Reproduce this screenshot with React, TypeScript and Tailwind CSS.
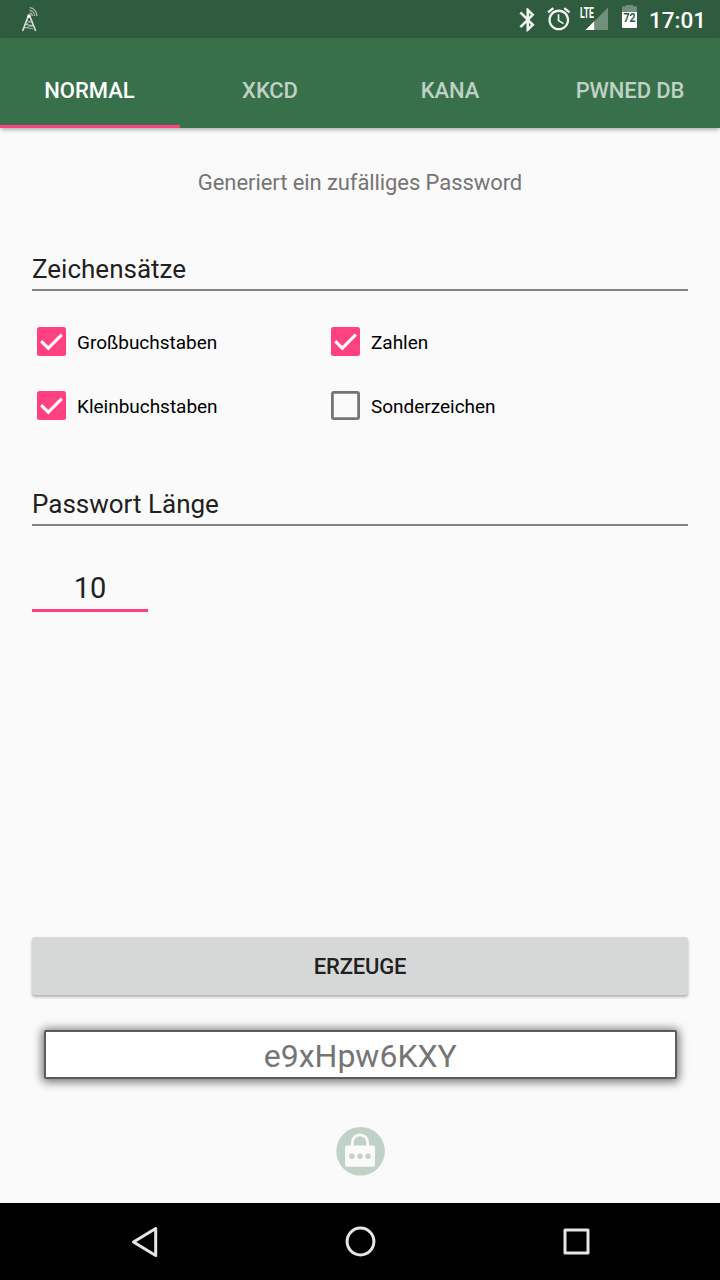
import { useState } from "react";

const tabs = ["NORMAL", "XKCD", "KANA", "PWNED DB"];

function StatusBar() {
  return (
    <div className="flex h-[38px] shrink-0 items-start bg-[#2f5b3e] text-white">
      <svg className="mt-[6px] ml-[20px] h-[26px] w-[20px]" viewBox="0 0 20 26" fill="none" stroke="#d5ded8">
        <path d="M8.3 10 2.6 25M9.700 10l6 15" strokeWidth="1.700" />
        <path d="M7 14.500l4.200 2M11 14.500l-5 4 7.500 1.500M5.500 18.500l7 1M4.500 22l9.500-2.500M4.500 21.500l8.500 1.300" strokeWidth=".9" opacity=".7" />
        <rect x="7.500" y="8.400" width="3" height="3.400" fill="white" stroke="none" />
        <path d="M9.500 6.800a3.200 3.200 0 0 1 2.800 3.200M9.500 4.300a5.600 5.600 0 0 1 5.100 5.700M9.500 1.700a7.900 7.900 0 0 1 7.400 8.300" strokeWidth="1.300" opacity=".7" />
      </svg>
      <div className="flex-1" />
      <svg className="mt-[5.7px] h-[27.6px] w-[27.6px]" viewBox="0 0 24 24" fill="#f3f6f4" stroke="#f3f6f4" strokeWidth=".3">
        <path d="M17.71 7.71 12 2h-1v7.59L6.41 5 5 6.41 10.59 12 5 17.59 6.41 19 11 14.41V22h1l5.71-5.71-4.3-4.29 4.3-4.29zM13 5.83l1.88 1.88L13 9.59V5.83zm1.88 10.46L13 18.17v-3.76l1.88 1.88z" />
      </svg>
      <svg className="mt-[5.4px] ml-[3.5px] h-[27.6px] w-[27.6px]" viewBox="0 0 24 24" fill="#f3f6f4">
        <path d="M22 5.72l-4.6-3.86-1.29 1.53 4.6 3.86L22 5.72zM7.88 3.39 6.6 1.86 2 5.71l1.29 1.53 4.59-3.85zM12.5 8H11v6l4.75 2.85.75-1.23-4-2.37V8zM12 4c-4.97 0-9 4.03-9 9s4.02 9 9 9c4.97 0 9-4.03 9-9s-4.03-9-9-9zm0 16c-3.87 0-7-3.13-7-7s3.13-7 7-7 7 3.13 7 7-3.13 7-7 7z" />
      </svg>
      <svg className="mt-[5px] ml-[7.2px] h-[27px] w-[30px]" viewBox="0 0 30 27">
        <path d="M28 2.500V25H5.500z" fill="#718f7b" />
        <path d="M14.200 16.300V25H5.500z" fill="#fff" />
        <path d="M0 1h14.500v13H0z" fill="#2f5b3e" />
        <text x="0" y="12.800" fill="#fff" fontFamily="Roboto" fontSize="14.500" fontWeight="700" textLength="14" lengthAdjust="spacingAndGlyphs">LTE</text>
      </svg>
      <svg className="mt-[5px] ml-[12px] h-[24px] w-[15px]" viewBox="0 0 15 24">
        <path d="M0 7V2.200Q0 1.200 1 1.200h3V0h7v1.200h3q1 0 1 1V7z" fill="#718f7b" />
        <path d="M0 7h15v14.500Q15 23 14 23H1Q0 23 0 21.500z" fill="#fff" />
        <text x="1.500" y="17.300" fill="#2f5b3e" fontFamily="Roboto" fontSize="12" fontWeight="700" textLength="12" lengthAdjust="spacingAndGlyphs">72</text>
      </svg>
      <span className="mt-[5px] mr-[14px] ml-[11px] w-[58px] text-right text-[22.5px] leading-[30px] font-medium">17:01</span>
    </div>
  );
}

function Check({ label, initial }: { label: string; initial: boolean }) {
  const [checked, setChecked] = useState(initial);
  return (
    <button className="flex h-16 items-center pl-[5px] text-left" role="checkbox" aria-checked={checked} onClick={() => setChecked(!checked)}>
      <svg className="-mt-px h-[29px] w-[29px] shrink-0" viewBox="0 0 29 29" fill="none">
        {checked ? (
          <>
            <rect width="29" height="29" rx="2.500" fill="#ff4081" />
            <path d="M4.200 14.200l7.100 7L24.800 7.700" stroke="#fafafa" strokeWidth="3.100" />
          </>
        ) : (
          <rect x="1.400" y="1.400" width="26.200" height="26.200" rx="1.500" stroke="#757575" strokeWidth="2.800" />
        )}
      </svg>
      <span className="mt-[2px] ml-[11px] text-[19px] leading-6 tracking-[-0.02px] text-black">{label}</span>
    </button>
  );
}

function SectionTitle({ children }: { children: string }) {
  return (
    <h2 className="h-[37px] border-b-2 border-[#828282] text-[26px] leading-[31px] text-[#212121]">{children}</h2>
  );
}

export default function App() {
  const [active, setActive] = useState(0);
  return (
    <div className="flex h-[1280px] w-[720px] flex-col overflow-hidden bg-[#fafafa] font-['Roboto',sans-serif]">
      <StatusBar />
      <nav className="grid h-[90px] shrink-0 grid-cols-4 bg-[#38704b] shadow-[0_3px_4px_-1px_rgba(0,0,0,0.3)]">
        {tabs.map((tab, i) => (
          <button
            key={tab}
            onClick={() => setActive(i)}
            className={
              i === active
                ? "border-b-[3px] border-[#ff4081] pt-[18px] pr-px text-[22px] leading-[30px] font-medium text-white"
                : "border-b-[3px] border-transparent pt-[18px] text-[22px] leading-[30px] font-medium tracking-[-0.1px] text-[#bed1c4]"
            }
          >
            {tab}
          </button>
        ))}
      </nav>
      <main className="flex flex-1 flex-col px-8">
        <p className="mt-[40px] text-center text-[22px] leading-[30px] tracking-[-0.08px] text-[#757575]">Generiert ein zufälliges Password</p>
        <div className="mt-[56px]">
          <SectionTitle>Zeichensätze</SectionTitle>
        </div>
        <div className="mt-[19px] grid grid-cols-[294px_1fr]">
          <Check label="Großbuchstaben" initial />
          <Check label="Zahlen" initial />
          <Check label="Kleinbuchstaben" initial />
          <Check label="Sonderzeichen" initial={false} />
        </div>
        <div className="mt-[51px]">
          <SectionTitle>Passwort Länge</SectionTitle>
        </div>
        <div className="mt-[42px] h-[44px] w-[116px] border-b-[3px] border-[#ff4081] text-center text-[29px] leading-[41px] text-[#212121]">10</div>
        <div className="flex-1" />
        <button className="h-[58px] shrink-0 rounded-[3px] bg-[#d6d8d7] text-[22px] leading-[60px] font-medium tracking-[-0.2px] text-[#212121] shadow-[0_2px_3px_rgba(0,0,0,0.3)]">ERZEUGE</button>
        <div className="mt-[35px] mr-[11px] ml-[11.5px] h-[49px] shrink-0 rounded-[2px] border-2 border-[#5c5c5c] bg-white text-center text-[32px] leading-[48px] text-[#757575] shadow-[0_1px_10px_2px_rgba(0,0,0,0.55)]">e9xHpw6KXY</div>
        <svg className="mt-[47px] mb-[27px] ml-px h-[50px] w-[50px] shrink-0 self-center" viewBox="0 0 50 50">
          <circle cx="24.600" cy="25.200" r="24.300" fill="#c0d2c6" />
          <g transform="translate(-1 .7)">
            <path d="M17.300 19v-3.200a7.700 7.700 0 0 1 15.400 0V19" fill="none" stroke="#fafafa" strokeWidth="2.700" />
            <rect x="10" y="18.700" width="30" height="21.300" rx="1.800" fill="#fafafa" />
            <g fill="#c0d2c6">
              <circle cx="17" cy="29.500" r="2.700" />
              <circle cx="25" cy="29.500" r="2.700" />
              <circle cx="33" cy="29.500" r="2.700" />
            </g>
          </g>
        </svg>
      </main>
      <footer className="flex h-[77px] shrink-0 items-center bg-black">
        <svg className="h-[77px] w-full" viewBox="0 0 720 77" fill="none" stroke="#e6e6e6" strokeWidth="3" strokeLinejoin="round">
          <path d="M155.700 25.500v27L133.500 39z" />
          <circle cx="360.500" cy="38.500" r="13.400" />
          <rect x="565" y="27" width="23" height="23" />
        </svg>
      </footer>
    </div>
  );
}
